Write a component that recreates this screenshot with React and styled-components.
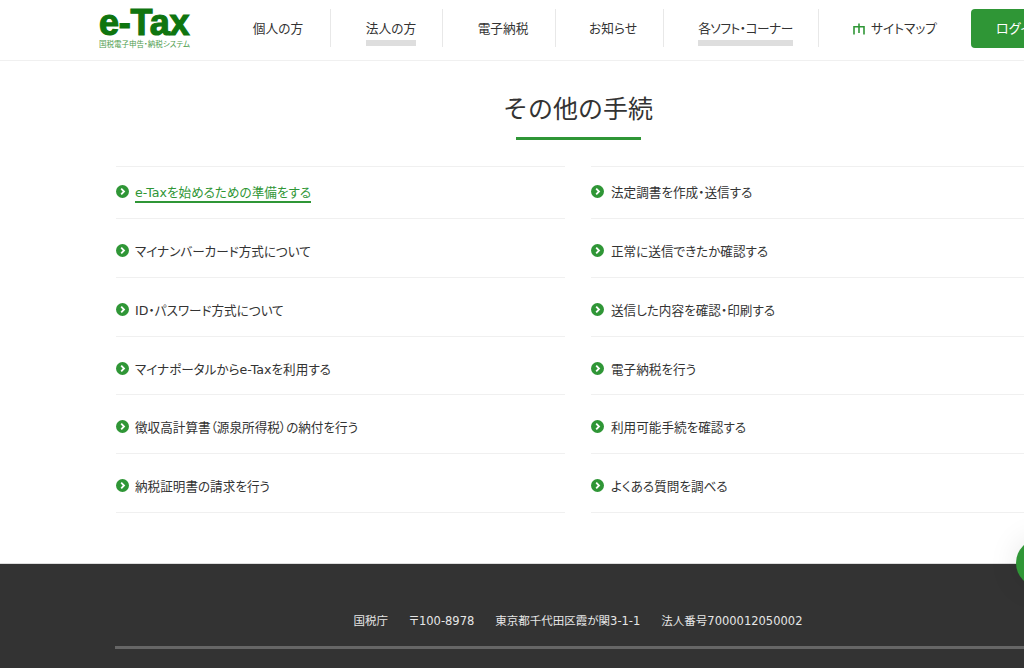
import React from "react";
import styled, { createGlobalStyle } from "styled-components";

const Global = createGlobalStyle`
  html, body { margin: 0; padding: 0; background: #fff; overflow: hidden; }
  body { font-family: "DejaVu Sans", "Noto Sans CJK JP", sans-serif; color: #333; }
  * { box-sizing: border-box; }
`;
const Page = styled.div`
  width: 1024px; height: 668px; overflow: hidden; position: relative;
`;
const Header = styled.header`
  width: 1024px; height: 61px; border-bottom: 1px solid #f0f0f0;
  display: flex; align-items: flex-start; padding-left: 98px;
`;
const Logo = styled.a`
  width: 119px; flex: none; padding-top: 6px; display: block;
`;
const LogoMark = styled.div`
  font-family: "Liberation Sans", sans-serif; font-weight: 700; font-size: 36px; line-height: 33px;
  letter-spacing: -0.2px; color: #0f750f; -webkit-text-stroke: 1.2px #0f750f; height: 33px; padding-left: 1px;
`;
const LogoSub = styled.div`
  font-family: "Noto Sans CJK JP", sans-serif; font-size: 7.5px; line-height: 10px; color: #4d9c4d; white-space: nowrap; padding-left: 1px; font-feature-settings: "palt";
`;
const Nav = styled.nav`
  display: flex; align-items: flex-start; padding-top: 9px; flex: none;
`;
const NavItem = styled.a`
  flex: none; height: 38px; width: ${p => p.$w}px; display: flex; justify-content: center;
  border-left: ${p => (p.$first ? "0" : "1px solid #e8e8e8")};
  padding: 10px 0 0 ${p => p.$shift}px;
  font-size: 12.7px; line-height: 20px; white-space: nowrap; color: #333;
  letter-spacing: ${p => p.$tight || 0}px;
  font-feature-settings: "palt";
`;
const NavLabel = styled.span`
  position: relative; display: flex; align-items: center; gap: 6px; height: 20px;
  ${p => p.$marked && `
    &::after { content: ""; position: absolute; left: 0; right: 0; top: 21px; height: 6px; background: #dedede; }
  `}
`;
const Login = styled.a`
  flex: none; width: 130px; height: 39px; margin-top: 9px; background: #2f9636; color: #fff; border-radius: 4px;
  font-size: 13px; line-height: 39px; padding-left: 25px; white-space: nowrap; font-feature-settings: "palt";
`;
const Title = styled.h2`
  margin: 0; padding-top: 30px; text-align: center; width: 1156px;
  font-size: 25px; line-height: 37px; font-weight: 400; color: #333;
  &::after { content: ""; display: block; width: 125px; height: 3px; background: #2f9636; margin: 9px 0 0 516px; }
`;
const Lists = styled.div`
  display: flex; gap: 26px; width: 1100px; margin: 26px 0 0 116px;
`;
const List = styled.ul`
  list-style: none; margin: 0; padding: 0; width: 449px; flex: none; border-top: 1px solid #f0f0f0;
`;
const Row = styled.li`
  border-bottom: 1px solid #f0f0f0; display: flex; align-items: flex-start; gap: ${p => p.$gap}px;
  padding-top: ${p => (p.$first ? 16 : 23)}px; height: ${p => (p.$first ? 52 : 58.8)}px;
`;
const RowText = styled.a`
  display: block; height: 20px; font-size: 12.6px; line-height: 20px; white-space: nowrap; font-feature-settings: "palt";
  color: ${p => (p.$active ? "#2f9636" : "#333")};
  ${p => p.$active && "height: 20px; border-bottom: 2px solid #2f9636;"}
`;
const Bullet = styled.svg`
  width: 13px; height: 13px; flex: none; margin-top: 2px;
`;
const Footer = styled.footer`
  margin-top: 50px; height: 110px; background: #333; border-top: 1px solid #ddd; color: #e6e6e6;
  padding: 47px 0 0 115px;
`;
const Address = styled.div`
  display: flex; justify-content: center; gap: 21px; width: 926px;
  font-size: 11.5px; line-height: 20px; font-feature-settings: "palt";
`;
const FooterRule = styled.div`
  height: 3px; background: #666; margin-top: 15px;
`;
const Floating = styled.div`
  position: absolute; left: 1016px; top: 539px; width: 48px; height: 48px; border-radius: 50%; background: #2f9636;
  box-shadow: 0 0 30px rgba(0,0,0,0.1);
`;

const Chevron = () => (
  <Bullet viewBox="0 0 13 13">
    <circle cx="6.5" cy="6.5" r="6.5" fill="#2f9636" />
    <path d="M5.2 3.7 L8 6.5 L5.2 9.3" fill="none" stroke="#fff" strokeWidth="1.8" />
  </Bullet>
);
const SitemapIcon = () => (
  <svg width="12" height="12" viewBox="0 0 12 12" fill="none" stroke="#2f9636" strokeWidth="1.6">
    <path d="M6 0.5 V10 M1 11.5 V3.7 H11 V11.5" />
  </svg>
);

const left = ["e-Taxを始めるための準備をする", "マイナンバーカード方式について", "ID・パスワード方式について", "マイナポータルからe-Taxを利用する", "徴収高計算書（源泉所得税）の納付を行う", "納税証明書の請求を行う"];
const right = ["法定調書を作成・送信する", "正常に送信できたか確認する", "送信した内容を確認・印刷する", "電子納税を行う", "利用可能手続を確認する", "よくある質問を調べる"];

const Column = ({ items, activeFirst, gap }) => (
  <List>
    {items.map((t, i) => (
      <Row key={t} $first={i === 0} $gap={gap}>
        <Chevron />
        <RowText $active={activeFirst && i === 0}>{t}</RowText>
      </Row>
    ))}
  </List>
);

export default function App() {
  return (
    <Page>
      <Global />
      <Header>
        <Logo>
          <LogoMark>e-Tax</LogoMark>
          <LogoSub>国税電子申告・納税システム</LogoSub>
        </Logo>
        <Nav>
          <NavItem $first $w={113} $shift={9}><NavLabel>個人の方</NavLabel></NavItem>
          <NavItem $w={112} $shift={9}><NavLabel $marked>法人の方</NavLabel></NavItem>
          <NavItem $w={113} $shift={8}><NavLabel>電子納税</NavLabel></NavItem>
          <NavItem $w={108} $shift={7}><NavLabel>お知らせ</NavLabel></NavItem>
          <NavItem $w={155} $shift={9} $tight={-0.5}><NavLabel $marked>各ソフト・コーナー</NavLabel></NavItem>
          <NavItem $w={153} $shift={0}><NavLabel><SitemapIcon />サイトマップ</NavLabel></NavItem>
        </Nav>
        <Login>ログイン</Login>
      </Header>
      <Title>その他の手続</Title>
      <Lists>
        <Column items={left} activeFirst gap={6} />
        <Column items={right} gap={7} />
      </Lists>
      <Footer>
        <Address>
          <span>国税庁</span>
          <span>〒100-8978</span>
          <span>東京都千代田区霞が関3-1-1</span>
          <span>法人番号7000012050002</span>
        </Address>
        <FooterRule />
      </Footer>
      <Floating />
    </Page>
  );
}
